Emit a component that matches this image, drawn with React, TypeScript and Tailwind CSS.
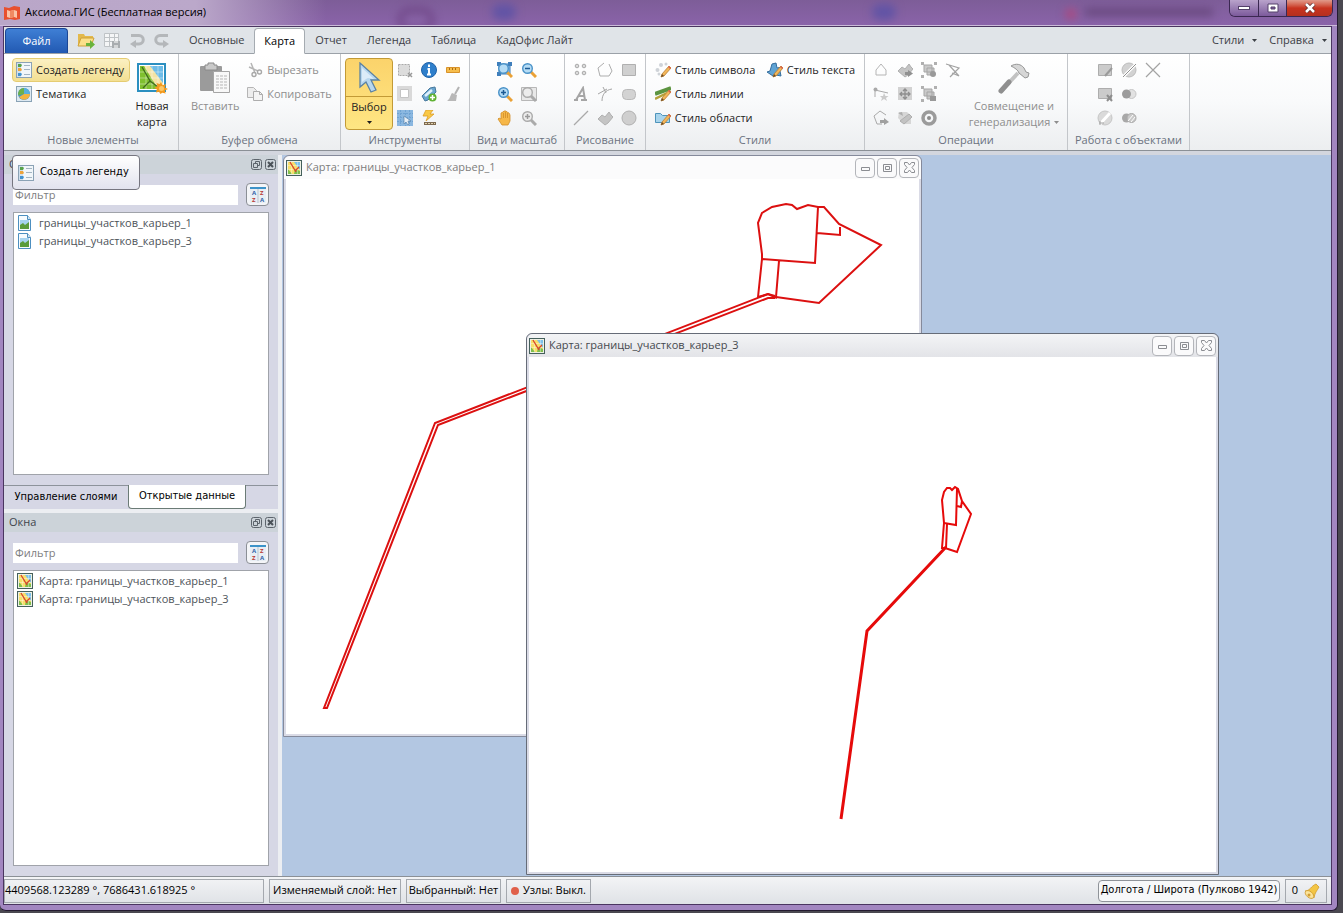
import React from 'react';
import { clsx } from 'clsx';

// ─── Icon base ────────────────────────────────────────────────────────────────

interface IconProps {
  className?: string;
}

const Glyph: React.FC<{ className?: string; box?: string; children: React.ReactNode }> = ({
  className = 'size-4',
  box = '0 0 16 16',
  children,
}) => (
  <svg viewBox={box} className={clsx('shrink-0', className)} fill="none" aria-hidden="true">
    {children}
  </svg>
);

const PENCIL = 'M6 15l1-3 7-8 2 2-7 8z';
const BLOB = 'M1 9l4-4 3 2 4-5 2 3 2 2-5 6-3 2z';

// ─── Coloured icons ───────────────────────────────────────────────────────────

const LogoIcon = () => (
  <Glyph>
    <path d="M0 2l5 1 5-2 6 1v12l-5 1-5-1-6 1z" fill="#e8502e" />
    <path d="M3 5l3 1 4-1 3 1v7l-3-1-4 1-3-1z" fill="#fbc3a6" />
    <path d="M6 6v7l4-1V5z" fill="#f08a62" />
  </Glyph>
);

const LegendIcon = () => (
  <Glyph>
    <rect x=".5" y=".5" width="15" height="15" fill="#f1f6fa" stroke="#8ba2b5" />
    <path d="M1 1v14h4V1z" fill="#cfdfec" />
    <path d="M2 2h3l1 1-1 2H2z" fill="#58a24b" />
    <path d="M2 6h3l1 2-1 1H2z" fill="#eda43b" />
    <path d="M2 11h3l1 1-1 2H2z" fill="#4292d0" />
    <path d="M8 3.500h6M8 7.500h6M8 12.500h6" stroke="#a3b4c2" />
  </Glyph>
);

const ThemeIcon = () => (
  <Glyph>
    <rect x=".5" y=".5" width="15" height="15" fill="#dde9f2" stroke="#8aa3b6" />
    <circle cx="8" cy="8" r="6" fill="#3f94d2" />
    <path d="M8 8V2a6 6 0 0 0-5.700 7.500z" fill="#6db04a" />
    <path d="M8 8h6a6 6 0 0 1-11 3z" fill="#f2b33d" />
    <path d="M8 8V2a6 6 0 0 1 6 6z" fill="#57b0dc" />
  </Glyph>
);

const NewMapIcon = () => (
  <Glyph className="size-8" box="0 0 32 32">
    <rect x="2" y="2" width="27" height="27" fill="#fff" stroke="#2b8fc0" strokeWidth="2" />
    <path d="M4 4h23v23H4z" fill="#7fc02f" />
    <path d="M12 4h15v18z" fill="#6dbce8" />
    <path d="M8 4h6l13 17v6h-5z" fill="#f4e3a3" />
    <path d="M4 10h23M4 16h23M4 22h23M10 4v23M16 4v23M22 4v23" stroke="#fff" strokeOpacity=".4" />
    <path d="M6 5l8 14-7 7M14 19l8 6" stroke="#3f6a1c" strokeWidth="1.300" />
    <path d="M25 20l1.500 3.300 3.500-1.300-1.300 3.500 3.300 1.500-3.300 1.500 1 3-3.500-.8-1.700 1.300-1.500-2.200-3 .8.8-3.300-2.300-1.500 2.800-1.500-.8-3.200 3.200 1z" fill="#f39a1e" />
    <circle cx="25.500" cy="26.500" r="2.500" fill="#fdc765" />
  </Glyph>
);

const FolderIcon = () => (
  <Glyph className="size-[18px]" box="0 0 18 18">
    <path d="M1 3h6l1 2h8v9H1z" fill="#e3b94c" />
    <path d="M1 15l3-8h13l-3 8z" fill="#fbe08a" stroke="#cfa038" />
    <path d="M9 12h4V9l5 4.500L13 18v-3H9z" fill="#6ab33c" />
  </Glyph>
);

const SaveTableIcon = () => (
  <Glyph>
    <path d="M.5 1.500h14v13H.5zM.5 5.500h14M.5 9.500h14M5.500 1v13M10.500 1v13" stroke="#bfc3c6" fill="#f5f6f7" />
    <path d="M8 9h8v7H8z" fill="#a9adb0" />
    <path d="M10 9h4v2h-4zM10 13h4v3h-4z" fill="#d4d6d7" />
  </Glyph>
);

const UndoIcon: React.FC<IconProps> = ({ className }) => (
  <Glyph className={clsx('size-4', className)}>
    <path d="M2 3.500h8a4 4 0 0 1 0 8.500H5" stroke="#b4b7ba" strokeWidth="3" />
    <path d="M7 8v8l-6-4z" fill="#b4b7ba" />
  </Glyph>
);

const CursorIcon = () => (
  <Glyph className="h-8 w-6" box="0 0 24 32">
    <path d="M3 1v24l6-5 5 10 5-2-5-10h8z" fill="#b8d7ee" stroke="#5b82a3" strokeWidth="1.300" />
    <path d="M5 6v14l4-3 2-1 6 1z" fill="#dcecf8" />
  </Glyph>
);

const InfoIcon = () => (
  <Glyph>
    <circle cx="8" cy="8" r="7.500" fill="#2f7fcb" stroke="#1f62a8" />
    <path d="M8 2.500v2.500M6.500 7H8v5.500M6 12.500h4" stroke="#fff" strokeWidth="2" />
  </Glyph>
);

const RulerIcon = () => (
  <Glyph>
    <path d="M1.500 5.500h13v5h-13z" fill="#f6bd4c" stroke="#d8922a" />
    <path d="M4.500 6v2M7.500 6v2M10.500 6v2" stroke="#a86a14" />
  </Glyph>
);

const TagIcon = () => (
  <Glyph>
    <path d="M1 10l8-8 5-1 1 5-8 8-3 1z" fill="#6aa6d0" stroke="#48799d" />
    <path d="M4 10l7-6" stroke="#dff0fb" strokeWidth="2.500" />
    <circle cx="11.500" cy="11.500" r="4" fill="#5fb233" />
    <path d="M9 11.500h5M11.500 9v5" stroke="#fff" strokeWidth="1.500" />
  </Glyph>
);

const GridSelectIcon = () => (
  <Glyph>
    <path d="M0 0h16v16H0z" fill="#8ab7e0" />
    <path d="M0 3.500h16M0 7.500h16M0 11.500h16M3.500 0v16M8.500 0v16M12.500 0v16" stroke="#6fa3d3" strokeDasharray="2 1" />
    <path d="M7 6v8l2-2 2 3 1-1-1-3h3z" fill="#e5eef6" stroke="#5e87ad" strokeWidth=".7" />
  </Glyph>
);

const FlashIcon = () => (
  <Glyph>
    <path d="M5 0h7L9 4h4l-8 7 2-5H2z" fill="#f9c846" stroke="#dc9c25" strokeWidth=".8" />
    <path d="M3 12h12v3H3z" fill="#7d6a4f" />
    <path d="M4 13.500h10" stroke="#e2d2ae" strokeDasharray="2 1" />
  </Glyph>
);

const ZoomIcon: React.FC<{ kind: 'fit' | 'in' | 'out' | 'area' | 'all' }> = ({ kind }) => {
  const grey = kind === 'area' || kind === 'all';
  return (
    <Glyph>
      {kind === 'fit' && <path d="M2 2h11v10H2z" fill="#8ec1ec" stroke="#3d7cb8" />}
      {kind === 'fit' && <path d="M0 0h4v4H0zM11 0h4v4h-4zM0 10h4v4H0z" fill="#3f7fbc" />}
      {kind === 'area' && <path d="M.5 1.500h15v13H.5z" fill="#e8e8e8" stroke="#b7b7b7" />}
      <path d="M10 10l5 5" stroke={grey ? '#aaa' : '#eaa136'} strokeWidth="3" />
      <circle cx="6.500" cy="6.500" r="4.800" fill={grey ? '#ececec' : '#b5dcf5'} stroke={grey ? '#aaa' : '#4a92c8'} strokeWidth="1.400" />
      {kind !== 'fit' && kind !== 'area' && (
        <path d="M4 6.500h5" stroke={grey ? '#999' : '#1d5b94'} strokeWidth="1.500" />
      )}
      {(kind === 'in' || kind === 'all') && (
        <path d="M6.500 4v5" stroke={grey ? '#999' : '#1d5b94'} strokeWidth="1.500" />
      )}
    </Glyph>
  );
};

const HandIcon = () => (
  <Glyph>
    <path d="M5 15l-4-6 1-1 2 1V3l2-1 1-1 2 0 1 1 2 1 1 2v6l-2 4z" fill="#f6b748" stroke="#d28e28" strokeWidth=".8" />
    <path d="M6.500 3v5M8.500 2v6M10.500 3v5" stroke="#d28e28" strokeWidth=".8" />
  </Glyph>
);

const StyleIcon: React.FC<{ kind: 'symbol' | 'line' | 'region' | 'text' }> = ({ kind }) => (
  <Glyph>
    {kind === 'symbol' && (
      <g fill="#cfd3d8">
        <circle cx="6" cy="3" r="2" />
        <circle cx="11" cy="2" r="1.500" />
        <circle cx="2.500" cy="8" r="2" />
        <circle cx="4" cy="12" r="1.500" />
      </g>
    )}
    {kind === 'line' && <path d="M0 8L16 2" stroke="#5c9440" strokeWidth="4" />}
    {kind === 'line' && <path d="M0 13l12-6" stroke="#b5a23c" strokeWidth="2.500" />}
    {kind === 'region' && <path d="M.5 3.500h5l2 2h7v7H.5z" fill="#a8d4ec" stroke="#4e94bb" />}
    {kind === 'text' && <path d="M0 10l3-1 2-7 4-1 1 5 5-1-2 4 1 5-5-1-3 1-3-2z" fill="#5fa3d4" stroke="#356e9d" />}
    <path d={PENCIL} fill="#f3b659" stroke="#b57d33" strokeWidth=".8" />
    <path d="M6 15l1-3 2 2z" fill="#6b4a25" />
    <path d="M13 5l1-1 2 2-1 1z" fill="#e0604b" />
  </Glyph>
);

const LayerFileIcon = () => (
  <Glyph>
    <path d="M1.500.5h9l3 4v11h-12z" fill="#f6fbfe" stroke="#4d8fc0" />
    <path d="M3 5h9v9H3z" fill="#a6d3ef" />
    <path d="M3 14v-4l3-2 2 2 4-3v7z" fill="#5a9c3b" />
    <path d="M10.500.5v4h3" fill="#d6e8f5" stroke="#4d8fc0" />
  </Glyph>
);

const MapIcon = () => (
  <Glyph>
    <rect x=".5" y=".5" width="15" height="15" fill="#eef1e4" stroke="#45605c" />
    <path d="M2 2h12v12H2z" fill="#f8df6a" />
    <path d="M8 2h6v8z" fill="#7cc0ea" />
    <path d="M2 9l4 5H2zM9 9l5 2v3H8z" fill="#7fbf4b" />
    <path d="M2 5.500h12M2 9.500h12M5.500 2v12M11.500 2v12" stroke="#fff" strokeOpacity=".35" />
    <path d="M4 2l6 10M9 11l4-4" stroke="#d8472b" strokeWidth="1.400" />
  </Glyph>
);

const SortIcon = () => (
  <Glyph>
    <path d="M0 0h16v16H0z" fill="#e8eef4" />
    <path d="M0 0h16v2H0z" fill="#3d93c9" />
    <path d="M8 2v14" stroke="#b9c5d0" />
    <g className="text-[6px] font-bold">
      <text x="2" y="8" fill="#2d5fa8">A</text>
      <text x="2" y="15" fill="#b93931">Z</text>
      <text x="10" y="8" fill="#b93931">Z</text>
      <text x="10" y="15" fill="#2d5fa8">A</text>
    </g>
  </Glyph>
);

const BellIcon = () => (
  <Glyph>
    <path d="M1 8c5 0 6-5 11-7l3 3c-2 4-4 5-5 11z" fill="#f3c544" stroke="#cf9a2c" strokeWidth=".8" />
    <ellipse cx="5.500" cy="11.500" rx="3" ry="5" transform="rotate(-50 5.500 11.500)" fill="#fbe39a" stroke="#cf9a2c" strokeWidth=".8" />
    <circle cx="5" cy="12" r="1.500" fill="#d19d33" />
  </Glyph>
);

// ─── Disabled (grey) icons ────────────────────────────────────────────────────

const PasteIcon = () => (
  <Glyph className="size-8" box="0 0 32 32">
    <rect x="1" y="4" width="22" height="25" rx="1" fill="#9b9b9b" />
    <path d="M6 3h3V1h6v2h3v5H6z" fill="#c9c9c9" stroke="#8a8a8a" />
    <path d="M14.500 9.500h16v21h-16z" fill="#f8f8f8" stroke="#a5a5a5" />
    <path d="M17 14h11M17 17h11M17 20h11M17 23h11M17 26h11" stroke="#b5b5b5" strokeDasharray="3 1" />
  </Glyph>
);

const CutIcon = () => (
  <Glyph>
    <path d="M4 1l4 10M2 5l9 4" stroke="#b5b5b5" strokeWidth="1.500" />
    <circle cx="7" cy="12.500" r="2" stroke="#a8a8a8" strokeWidth="1.400" />
    <circle cx="12.500" cy="10" r="2" stroke="#a8a8a8" strokeWidth="1.400" />
  </Glyph>
);

const CopyIcon = () => (
  <Glyph>
    <path d="M.5 1.500h6l3 3v7h-9z" fill="#ededed" stroke="#b5b5b5" />
    <path d="M6.500 5.500h6l3 3v6h-9z" fill="#f4f4f4" stroke="#adadad" />
    <path d="M12.500 5.500v3h3" stroke="#adadad" />
  </Glyph>
);

const HammerIcon = () => (
  <Glyph className="size-8" box="0 0 32 32">
    <path d="M4 28L20 11" stroke="#c2c2c2" strokeWidth="4" />
    <path d="M3 29l8-9" stroke="#8f8f8f" strokeWidth="5" strokeLinecap="round" />
    <path d="M13 4c5-3 10-2 13 2l2 4 3 1-1 4-3 1-6-5c-1-3-4-5-8-7z" fill="#d6d6d6" stroke="#969696" />
  </Glyph>
);

type GreyName =
  | 'selectRect' | 'invert' | 'broom' | 'points' | 'polygon' | 'rect' | 'letter' | 'arc' | 'rounded' | 'line'
  | 'blob' | 'ellipse' | 'home' | 'blobArrow' | 'groupAdd' | 'tri' | 'nodeStar' | 'move' | 'groupRemove'
  | 'polyArrow' | 'rotate' | 'ring' | 'editRect' | 'splitCircle' | 'cross' | 'rectX' | 'overlap' | 'circleArrow' | 'hatch';

const GREY: Record<GreyName, React.ReactNode> = {
  selectRect: <><path d="M1.500 2.500h11v11h-11z" fill="#dcdcdc" stroke="#a9a9a9" strokeDasharray="2 1" /><path d="M11 11l4 4M15 11l-4 4" stroke="#999" strokeWidth="1.500" /></>,
  invert: <><path d="M0 0h15v15H0z" fill="#d9d9d9" /><path d="M3.500 3.500h8v8h-8z" fill="#fff" stroke="#c4c4c4" /></>,
  broom: <><path d="M14 1l-4 7" stroke="#b3b3b3" strokeWidth="2" /><path d="M7 7l5 2-1 6H2c3-2 3-5 5-8z" fill="#b8b8b8" /></>,
  points: <g fill="#dcdcdc" stroke="#aaa"><circle cx="4" cy="4" r="1.800" /><circle cx="11" cy="4" r="1.800" /><circle cx="4" cy="11" r="1.800" /><circle cx="11" cy="11" r="1.800" /></g>,
  polygon: <path d="M7 1L1 6l2 8h9l3-5-3-7" stroke="#adadad" />,
  rect: <path d="M1.500 2.500h13v11h-13z" fill="#d0d0d0" stroke="#b0b0b0" />,
  letter: <path d="M1 14h4M8 14h6M3 14L10 2l2 12M6 10h5" stroke="#a5a5a5" strokeWidth="2" />,
  arc: <><path d="M5 15C5 9 8 4 15 3" stroke="#a5a5a5" /><path d="M1 8l9-5M6 1l3 6" stroke="#a5a5a5" /></>,
  rounded: <rect x="1.500" y="3.500" width="13" height="10" rx="4" fill="#d3d3d3" stroke="#b9b9b9" />,
  line: <path d="M1 15L15 1" stroke="#a9a9a9" strokeWidth="1.300" />,
  blob: <path d={BLOB} fill="#c4c4c4" stroke="#b0b0b0" />,
  ellipse: <circle cx="8" cy="8" r="7" fill="#cfcfcf" stroke="#b0b0b0" />,
  home: <path d="M8 2l5 6v5H3V8z" stroke="#b5b5b5" />,
  blobArrow: <><path d={BLOB} fill="#c4c4c4" stroke="#b0b0b0" /><path d="M8 10h3V8l5 3.500-5 3.500v-2H8z" fill="#909090" /></>,
  groupAdd: <><path d="M3 3h8v7H3zM6 6h7v7H6z" fill="#c9c9c9" stroke="#a5a5a5" /><path d="M0 0h3v3H0zM13 0h3v3h-3zM0 13h3v3H0z" fill="#b0b0b0" /><circle cx="12" cy="12" r="3" fill="#999" /></>,
  tri: <path d="M1 2l13 4-9 9M4 3l10 11M7 11l7 3" stroke="#a3a3a3" strokeWidth="1.200" />,
  nodeStar: <><path d="M2 11V4l13 3" stroke="#a9a9a9" /><circle cx="2.500" cy="3.500" r="2" fill="#a9a9a9" /><path d="M11 7l1.500 3h3l-2.500 2 1 3-3-2-3 2 1-3-2-2h3z" fill="#cbcbcb" /></>,
  move: <><path d="M1 1h14v13H1z" fill="#d2d2d2" /><path d="M8 3v10M3 8h10M6 5l2-2 2 2M6 11l2 2 2-2M5 6L3 8l2 2M11 6l2 2-2 2" stroke="#8f8f8f" strokeWidth="1.300" /></>,
  groupRemove: <><path d="M3 3h8v7H3zM6 6h7v7H6z" fill="#c9c9c9" stroke="#a5a5a5" /><path d="M0 0h3v3H0zM13 0h3v3h-3zM0 13h3v3H0z" fill="#b0b0b0" /><path d="M9 10h6v5H9z" fill="#999" /></>,
  polyArrow: <><path d="M9 14H4L1 6l6-5 6 4" stroke="#a9a9a9" /><path d="M7 10h4V8l5 4-5 3v-2H7z" fill="#a0a0a0" /></>,
  rotate: <><path d="M2 2h8l4 4v8H7L1 8z" fill="#d6d6d6" /><path d="M3 11l9-7 3 3-8 7z" fill="#c2c2c2" stroke="#aeaeae" /><path d="M1 3l4-1 1 4z" fill="#aeaeae" /></>,
  ring: <><circle cx="8" cy="8" r="6" stroke="#9b9b9b" strokeWidth="3.500" /><circle cx="8" cy="8" r="2" fill="#8c8c8c" /></>,
  editRect: <><path d="M1.500 2.500h13v11h-13z" fill="#cbcbcb" stroke="#adadad" /><path d="M8 14l7-8" stroke="#9a9a9a" strokeWidth="2" /></>,
  splitCircle: <><circle cx="8" cy="8" r="7" fill="#d2d2d2" stroke="#bdbdbd" /><path d="M2 15L15 2" stroke="#fff" strokeWidth="3" /><path d="M2 15L15 2" stroke="#909090" /></>,
  cross: <path d="M1 1l14 14M15 1L1 15" stroke="#a3a3a3" strokeWidth="1.200" />,
  rectX: <><path d="M1.500 2.500h13v10h-13z" fill="#cbcbcb" stroke="#adadad" /><path d="M10 9l5 6M15 9l-5 6" stroke="#8e8e8e" strokeWidth="2" /></>,
  overlap: <><rect x="6" y="3.500" width="9" height="9" rx="4.500" fill="#e2e2e2" stroke="#c6c6c6" /><circle cx="5.500" cy="8" r="4.500" fill="#9c9c9c" /></>,
  circleArrow: <><circle cx="8" cy="8" r="7" fill="#dadada" stroke="#c6c6c6" /><path d="M3 14L13 3" stroke="#fff" strokeWidth="3" /><path d="M2 13h5M3 11v4" stroke="#a0a0a0" /></>,
  hatch: <><circle cx="5.500" cy="8" r="4.500" fill="#a8a8a8" /><circle cx="10.500" cy="8" r="4.500" fill="#c9c9c9" stroke="#aaa" /><path d="M7 11l5-6M10 12l4-5" stroke="#fff" /></>,
};

const grey = (name: GreyName) => <Glyph>{GREY[name]}</Glyph>;

function Caret() {
  return (
    <svg viewBox="0 0 5 3" className="h-[3px] w-[5px] shrink-0" aria-hidden="true">
      <path d="M0 0h5L2.500 3z" fill="currentColor" />
    </svg>
  );
}

// ─── Ribbon pieces ────────────────────────────────────────────────────────────

const RibbonGroup: React.FC<{ title: string; className?: string; children: React.ReactNode }> = ({
  title,
  className = '',
  children,
}) => (
  <section
    className={clsx(
      'flex shrink-0 flex-col border-r border-[#c3c6ca] bg-linear-to-b from-white via-[#f9fafb] to-[#eceef0] pt-1',
      className,
    )}
  >
    <div className="flex h-18 justify-center">{children}</div>
    <h2 className="h-5 text-center leading-5 whitespace-nowrap text-[#6b7280]">{title}</h2>
  </section>
);

interface ToolItem {
  label: string;
  icon: React.ReactNode;
}

/** Icon-only tools, listed column by column */
const ToolColumns: React.FC<{ columns: ToolItem[][] }> = ({ columns }) => (
  <div className="flex">
    {columns.map((column, i) => (
      <div key={i} className="flex w-6 flex-col">
        {column.map((tool) => (
          <button key={tool.label} type="button" aria-label={tool.label} className="flex size-6 items-center justify-center">
            {tool.icon}
          </button>
        ))}
      </div>
    ))}
  </div>
);

const SmallButton: React.FC<ToolItem & { className?: string }> = ({ label, icon, className = '' }) => (
  <button type="button" className={clsx('flex h-6 items-center gap-1 whitespace-nowrap', className)}>
    {icon}
    <span>{label}</span>
  </button>
);

const t = (label: string, icon: React.ReactNode): ToolItem => ({ label, icon });

const INSTRUMENTS = [
  [t('Выбор рамкой', grey('selectRect')), t('Инверсия', grey('invert')), t('Выбрать все', <GridSelectIcon />)],
  [t('Информация', <InfoIcon />), t('Подпись', <TagIcon />), t('Анализ', <FlashIcon />)],
  [t('Линейка', <RulerIcon />), t('Очистить', grey('broom'))],
];

const ZOOMS = [
  [t('Показать все', <ZoomIcon kind="fit" />), t('Увеличить', <ZoomIcon kind="in" />), t('Рука', <HandIcon />)],
  [t('Уменьшить', <ZoomIcon kind="out" />), t('Область', <ZoomIcon kind="area" />), t('Масштаб', <ZoomIcon kind="all" />)],
];

const DRAWING = [
  [t('Точки', grey('points')), t('Текст', grey('letter')), t('Линия', grey('line'))],
  [t('Полилиния', grey('polygon')), t('Дуга', grey('arc')), t('Полигон', grey('blob'))],
  [t('Прямоугольник', grey('rect')), t('Скругленный', grey('rounded')), t('Эллипс', grey('ellipse'))],
];

const OPERATIONS = [
  [t('Форма', grey('home')), t('Узлы', grey('nodeStar')), t('Замкнуть', grey('polyArrow'))],
  [t('Сместить', grey('blobArrow')), t('Двигать', grey('move')), t('Повернуть', grey('rotate'))],
  [t('Объединить', grey('groupAdd')), t('Разъединить', grey('groupRemove')), t('Буфер', grey('ring'))],
  [t('Триангуляция', grey('tri'))],
];

const OBJECTS = [
  [t('Изменить', grey('editRect')), t('Удалить', grey('rectX')), t('Вернуть', grey('circleArrow'))],
  [t('Разрезать', grey('splitCircle')), t('Вычесть', grey('overlap')), t('Пересечь', grey('hatch'))],
  [t('Отмена', grey('cross'))],
];

const Ribbon = () => (
  <div className="flex h-[97px] shrink-0 border-b border-[#8b9096] bg-linear-to-b from-white via-[#f9fafb] to-[#eceef0]">
    <RibbonGroup title="Новые элементы" className="w-[175px] pl-1">
      <div className="flex w-[118px] flex-col">
        <SmallButton
          label="Создать легенду"
          icon={<LegendIcon />}
          className="rounded-sm border border-[#e5cc72] bg-linear-to-b from-[#fbf0c2] to-[#f3df92] px-[3px]"
        />
        <SmallButton label="Тематика" icon={<ThemeIcon />} className="px-1" />
      </div>
      <button type="button" className="flex w-11 flex-col items-center pt-1 leading-4">
        <NewMapIcon />
        <span className="pt-1">Новая карта</span>
      </button>
    </RibbonGroup>

    <RibbonGroup title="Буфер обмена" className="w-[162px]">
      <button type="button" className="flex w-14 flex-col items-center pt-1 leading-4 text-[#8e8e8e]">
        <PasteIcon />
        <span className="pt-1">Вставить</span>
      </button>
      <div className="flex flex-col pl-1 text-[#8e8e8e]">
        <SmallButton label="Вырезать" icon={<CutIcon />} />
        <SmallButton label="Копировать" icon={<CopyIcon />} />
      </div>
    </RibbonGroup>

    <RibbonGroup title="Инструменты" className="w-[129px]">
      <button
        type="button"
        className="flex w-12 flex-col items-center rounded-sm border border-[#c29a36] bg-linear-to-b from-[#fbd36b] to-[#fee683]"
      >
        <span className="flex h-[38px] w-full items-center justify-center border-b border-[#c29a36]">
          <CursorIcon />
        </span>
        <span className="pb-1 leading-5">Выбор</span>
        <Caret />
      </button>
      <ToolColumns columns={INSTRUMENTS} />
    </RibbonGroup>

    <RibbonGroup title="Вид и масштаб" className="w-[95px]">
      <ToolColumns columns={ZOOMS} />
    </RibbonGroup>

    <RibbonGroup title="Рисование" className="w-[81px]">
      <ToolColumns columns={DRAWING} />
    </RibbonGroup>

    <RibbonGroup title="Стили" className="w-[219px]">
      <div className="flex w-28 flex-col">
        <SmallButton label="Стиль символа" icon={<StyleIcon kind="symbol" />} />
        <SmallButton label="Стиль линии" icon={<StyleIcon kind="line" />} />
        <SmallButton label="Стиль области" icon={<StyleIcon kind="region" />} />
      </div>
      <SmallButton label="Стиль текста" icon={<StyleIcon kind="text" />} />
    </RibbonGroup>

    <RibbonGroup title="Операции" className="w-[203px]">
      <ToolColumns columns={OPERATIONS} />
      <button type="button" className="flex w-[98px] flex-col items-center pt-1 leading-4 text-[#8e8e8e]">
        <HammerIcon />
        <span className="pt-1 whitespace-nowrap">Совмещение и</span>
        <span className="flex items-center gap-1">
          генерализация
          <Caret />
        </span>
      </button>
    </RibbonGroup>

    <RibbonGroup title="Работа с объектами" className="w-[122px]">
      <ToolColumns columns={OBJECTS} />
    </RibbonGroup>
  </div>
);

// ─── Title bar and menu ───────────────────────────────────────────────────────

/** Glass title bar: shapes behind the window show through as soft spots */
const TitleBar = () => (
  <header className="relative flex h-[26px] shrink-0 items-center justify-between overflow-hidden border-b border-[#cbbbd9] bg-linear-to-b from-[#7d5d98] to-[#8a63a9]">
    <div className="absolute top-2 left-[398px] h-6 w-9 rounded-full border-4 border-[#6a3f80] blur-xs" />
    <div className="absolute top-1 left-[492px] h-4 w-6 rounded-full bg-[#6254a5] blur-xs" />
    <div className="absolute top-1 left-[872px] h-4 w-6 rounded-full bg-[#6254a5] blur-xs" />
    <div className="absolute top-2 left-[1065px] h-3 w-3 rounded-full bg-[#a84a82] blur-xs" />
    <div className="absolute top-2 left-[1085px] h-2 w-32 bg-[#69497f] blur-xs" />
    <div className="relative flex h-full items-center gap-[5px] bg-linear-to-r from-[#b9a6c8] via-[#bba8ca] via-60% to-transparent pr-30 pl-1">
      <LogoIcon />
      <h1 className="text-black">Аксиома.ГИС (Бесплатная версия)</h1>
    </div>
    <div className="relative mr-1 flex h-[17px] self-start overflow-hidden rounded-b-md border border-t-0 border-[#3b2851]">
      <button type="button" aria-label="Свернуть" className="flex w-7 items-center justify-center bg-linear-to-b from-[#b9a3cb] to-[#7c5a9b]">
        <span className="h-1 w-3 border border-[#54406a] bg-white" />
      </button>
      <button type="button" aria-label="Развернуть" className="flex w-7 items-center justify-center border-l border-[#3b2851] bg-linear-to-b from-[#b9a3cb] to-[#7c5a9b]">
        <Glyph className="h-[10px] w-3" box="0 0 12 10">
          <path d="M1 1h10v8H1z" fill="#fff" stroke="#54406a" />
          <path d="M4 4h4v2H4z" fill="#7c5a9b" stroke="#54406a" />
        </Glyph>
      </button>
      <button type="button" aria-label="Закрыть" className="flex w-[46px] items-center justify-center border-l border-[#3b2851] bg-linear-to-b from-[#e09a8b] via-[#c8331f] to-[#b5301f]">
        <Glyph className="h-[10px] w-3" box="0 0 12 10">
          <path d="M2 1l8 8M10 1L2 9" stroke="#5c2a2a" strokeWidth="4" />
          <path d="M2 1l8 8M10 1L2 9" stroke="#fff" strokeWidth="2.500" />
        </Glyph>
      </button>
    </div>
  </header>
);

const TABS = ['Основные', 'Карта', 'Отчет', 'Легенда', 'Таблица', 'КадОфис Лайт'];

const MenuBar = () => (
  <nav className="flex h-[27px] shrink-0 items-stretch border-b border-[#9ba1a8] bg-[#e0e4e8] text-[#3c4046]">
    <button type="button" className="mt-px ml-px w-[63px] rounded-t-sm border border-b-0 border-[#1b4695] bg-linear-to-b from-[#3f7fd5] to-[#2259b2] text-white">
      Файл
    </button>
    <div className="flex items-center gap-[9px] px-[9px]">
      <button type="button" aria-label="Открыть"><FolderIcon /></button>
      <button type="button" aria-label="Сохранить"><SaveTableIcon /></button>
      <button type="button" aria-label="Отменить"><UndoIcon /></button>
      <button type="button" aria-label="Повторить"><UndoIcon className="-scale-x-100" /></button>
    </div>
    <div className="flex">
      {TABS.map((tab) => (
        <button
          key={tab}
          type="button"
          className={clsx(
            'mt-px border px-[9px] whitespace-nowrap',
            tab === 'Карта' ? '-mb-px rounded-t-sm border-[#a5abb1] border-b-white bg-white text-black' : 'border-transparent',
          )}
        >
          {tab}
        </button>
      ))}
    </div>
    <div className="ml-auto flex items-center gap-3 pr-1">
      <button type="button" className="flex items-center gap-2">Стили <Caret /></button>
      <button type="button" className="flex items-center gap-2">Справка <Caret /></button>
    </div>
  </nav>
);

// ─── Side panels ──────────────────────────────────────────────────────────────

const PanelHeader: React.FC<{ title: string }> = ({ title }) => (
  <div className="flex h-[19px] shrink-0 items-center bg-[#ccd3d9] pr-[2px] pl-[5px] text-[#3f454c]">
    <h2 className="flex-1">{title}</h2>
    <div className="flex gap-[3px]">
      <button type="button" aria-label="Открепить">
        <Glyph className="size-[11px]" box="0 0 11 11">
          <rect x=".5" y=".5" width="10" height="10" rx="2" stroke="#5d656d" />
          <path d="M2.500 4.500h4v4h-4zM4.500 4V2.500h4v4H7" stroke="#5d656d" />
        </Glyph>
      </button>
      <button type="button" aria-label="Закрыть панель">
        <Glyph className="size-[11px]" box="0 0 11 11">
          <rect x=".5" y=".5" width="10" height="10" rx="2" stroke="#5d656d" />
          <path d="M3 3l5 5M8 3L3 8" stroke="#4a5158" strokeWidth="2" />
        </Glyph>
      </button>
    </div>
  </div>
);

const DataPanel: React.FC<{ items: string[]; icon: React.ReactNode }> = ({ items, icon }) => (
  <div className="flex min-h-0 flex-1 flex-col gap-[6px] px-[9px] pt-[9px] pb-[10px]">
    <div className="flex items-center gap-2">
      <input
        type="text"
        aria-label="Фильтр"
        placeholder="Фильтр"
        className="h-5 min-w-0 flex-1 bg-white px-[2px] placeholder:text-[#7d7d80]"
      />
      <button type="button" aria-label="Сортировка" className="flex size-[23px] items-center justify-center rounded-sm border border-[#8b8f96] bg-[#f4f5f8]">
        <SortIcon />
      </button>
    </div>
    <ul className="flex-1 overflow-hidden border border-[#a0a3aa] bg-white px-[3px] pt-px">
      {items.map((item) => (
        <li key={item} className="flex h-[18px] items-center gap-[6px] whitespace-nowrap text-[#4d5359]">
          {icon}
          {item}
        </li>
      ))}
    </ul>
  </div>
);

const Sidebar = () => (
  <aside className="flex w-[274px] shrink-0 flex-col bg-[#d6d7e5]">
    <div className="flex h-[354px] flex-col">
      <PanelHeader title="Открытые данные" />
      <DataPanel items={['границы_участков_карьер_1', 'границы_участков_карьер_3']} icon={<LayerFileIcon />} />
      <div className="flex h-6 shrink-0 border-t border-[#8d939b] font-['DejaVu_Sans_Condensed','DejaVu_Sans',sans-serif] text-[11px] text-black">
        <button type="button" className="w-31">Управление слоями</button>
        <button type="button" className="-mt-px w-[118px] rounded-b-sm border border-t-0 border-[#6b7b76] bg-white">
          Открытые данные
        </button>
      </div>
    </div>
    <div className="h-1 shrink-0 bg-[#eceef2]" />
    <div className="flex min-h-0 flex-1 flex-col">
      <PanelHeader title="Окна" />
      <DataPanel
        items={['Карта: границы_участков_карьер_1', 'Карта: границы_участков_карьер_3']}
        icon={<MapIcon />}
      />
    </div>
  </aside>
);

// ─── Map windows ──────────────────────────────────────────────────────────────

const WINDOW_BUTTONS = [
  { label: 'Свернуть окно', d: 'M2.500 6.500h8v3h-8z' },
  { label: 'Развернуть окно', d: 'M2.500 3.500h8v7h-8zM4.500 5.500h4v3h-4z' },
  { label: 'Закрыть окно', d: 'M1.500 1.500h3l2 2.500 2-2.500h3v2L9 6.500l2.500 3v2h-3l-2-2.500-2 2.500h-3v-2l2.500-3-2.500-3z' },
];

const MapWindow: React.FC<{
  title: string;
  active?: boolean;
  className: string;
  children: React.ReactNode;
}> = ({ title, active = false, className, children }) => (
  <article
    className={clsx(
      'absolute flex flex-col rounded-t-md border bg-[#dadbe6] px-[2px] pb-[2px]',
      active ? 'border-[#666c78]' : 'border-[#858a9b]',
      className,
    )}
  >
    <div
      className={clsx(
        '-mx-[2px] flex h-[23px] shrink-0 items-center gap-1 rounded-t-md px-[2px]',
        active ? 'bg-linear-to-b from-[#f3f4f6] to-[#e3e4e8] text-[#45494e]' : 'bg-[#fbfbfc] text-[#7d7d7d]',
      )}
    >
      <MapIcon />
      <h2 className="flex-1">{title}</h2>
      <div className="flex gap-[2px]">
        {WINDOW_BUTTONS.map((button) => (
          <button key={button.label} type="button" aria-label={button.label} className="flex size-5 items-center justify-center rounded-sm border border-[#b3b5ba] bg-[#fafafb]">
            <Glyph className="size-[13px]" box="0 0 13 13">
              <path d={button.d} stroke="#8b8d92" />
            </Glyph>
          </button>
        ))}
      </div>
    </div>
    <div className="min-h-0 flex-1 bg-white">{children}</div>
  </article>
);

const Desktop = () => (
  <main className="relative min-w-0 flex-1 overflow-hidden bg-[#b3c7e2]">
    <MapWindow title="Карта: границы_участков_карьер_1" className="top-0 left-px h-[582px] w-[639px]">
      <svg viewBox="286 178 633 555" className="block size-full" fill="none" stroke="#dc1010" strokeWidth="2">
        <path d="M762 258v-5l-4-31 4-10 10-6 14-3 6 1 5 4 11-4 10 2h6l15 17 42 21-62 58-43-6" />
        <path d="M762 258l53 4 3-56M817 232l23 2v-8M762 258l-4 38 10-3 9 4M779 260l-3 36" />
        <path d="M775 295l-7-2-333 129-111 285h3l111-283 330-127h7" />
      </svg>
    </MapWindow>
    <MapWindow active title="Карта: границы_участков_карьер_3" className="top-[178px] left-[244px] h-[542px] w-[693px]">
      <svg viewBox="529 357 687 515" className="block size-full" fill="none" stroke="#e60a0a">
        <path
          d="M944 523l-2-23 2-8 3-4h3l2 2 3-3 3 2 4 12 9 13-14 38-12-4M944 523l12 2 1-36M957 506l4 1 1-6M944 523l-2 25h4l1-24"
          strokeWidth="2"
        />
        <path d="M946 547l-79 84-26 188" strokeWidth="3" />
      </svg>
    </MapWindow>
  </main>
);

// ─── Status bar ───────────────────────────────────────────────────────────────

const StatusCell: React.FC<{ className?: string; children: React.ReactNode }> = ({ className = '', children }) => (
  <div className={clsx('flex h-6 items-center border border-[#a4a8ae] whitespace-nowrap', className)}>{children}</div>
);

const StatusBar = () => (
  <footer className="flex h-[28px] shrink-0 items-center gap-[5px] border-t border-[#8b9096] bg-linear-to-b from-[#f3f4f6] to-[#dfe2e6] pr-1 text-black">
    <StatusCell className="w-[260px]">4409568.123289 °, 7686431.618925 °</StatusCell>
    <StatusCell className="w-[132px] justify-center">Изменяемый слой: Нет</StatusCell>
    <StatusCell className="w-[95px] justify-center">Выбранный: Нет</StatusCell>
    <StatusCell className="w-[85px] justify-center gap-1">
      <span className="size-2 rounded-full bg-[#e0604a]" />
      Узлы: Выкл.
    </StatusCell>
    <button
      type="button"
      className="ml-auto h-[22px] w-[182px] rounded-sm border border-[#8f9399] bg-[#f7f8f9] font-['DejaVu_Sans_Condensed','DejaVu_Sans',sans-serif] text-[11px] whitespace-nowrap"
    >
      Долгота / Широта (Пулково 1942)
    </button>
    <StatusCell className="w-[42px] justify-center gap-[6px]">
      0
      <BellIcon />
    </StatusCell>
  </footer>
);

// ─── Application ──────────────────────────────────────────────────────────────

export default function App() {
  return (
    <div className="h-screen min-h-[640px] overflow-hidden bg-[#4a4850] pr-[5px] pb-[2px] font-['Open_Sans','Noto_Sans',sans-serif] text-[11px] text-[#1e1e1e]">
      <div className="flex h-full flex-col rounded-b-md border-r border-b border-[#241a30] bg-[#a286c0]">
        <TitleBar />
        <div className="relative mr-[5px] mb-[5px] ml-[3px] flex min-h-0 flex-1 flex-col border border-[#4a3560] bg-[#eceef2]">
          <MenuBar />
          <Ribbon />
          <div className="h-1 shrink-0 bg-[#d3d6de]" />
          <div className="flex min-h-0 flex-1">
            <Sidebar />
            <div className="w-1 shrink-0 bg-[#eceef2]" />
            <Desktop />
          </div>
          <StatusBar />
          <button
            type="button"
            className="absolute top-32 left-2 flex h-[35px] w-32 items-center gap-[6px] rounded-sm border border-[#767680] bg-linear-to-b from-white to-[#e2e3ee] px-[5px] font-['DejaVu_Sans_Condensed','DejaVu_Sans',sans-serif] text-[11px] whitespace-nowrap text-black"
          >
            <LegendIcon />
            Создать легенду
          </button>
        </div>
      </div>
    </div>
  );
}
